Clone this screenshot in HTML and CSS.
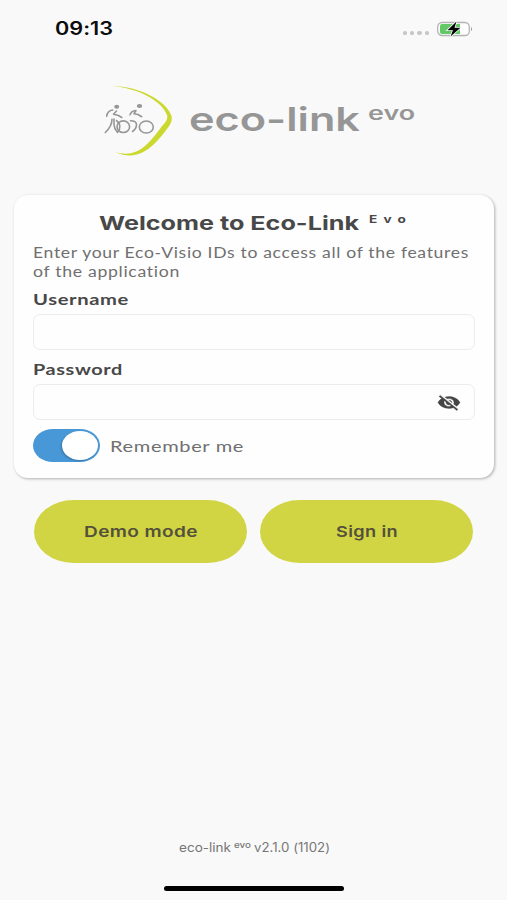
FILE: index.html
```html
<!DOCTYPE html>
<html lang="en">
<head>
<meta charset="utf-8">
<title>Eco-Link Evo</title>
<link rel="stylesheet" href="styles.css">
</head>
<body>
<div class="status">
  <span class="fit time" data-width="58">09:13</span>
  <div class="status-icons">
    <div class="dots"><i></i><i></i><i></i><i></i></div>
    <svg class="battery" width="38" height="18" viewBox="0 0 38 18">
      <rect x="1.7" y="2.500" width="31.600" height="13" rx="4.500" fill="#fff" stroke="#b3b3b3" stroke-width="1.300"/>
      <path d="M6 4h18v10H6q-2 0-2-2V6q0-2 2-2z" fill="#62c966"/>
      <path d="M35 6.700q2 2.300 0 4.600z" fill="#999"/>
      <path d="M20.500 1.500 11.500 10.300h5.500L14.500 16.500l10-8.800h-6z" fill="#000" stroke="#fff" stroke-width="1.600" paint-order="stroke"/>
    </svg>
  </div>
</div>
<header class="brand">
  <svg width="70" height="72" viewBox="0 0 70 72">
    <path d="M8 1C35 1 63 16 67.500 31c1 5-1 8-3 11C50 61 36 78 11 67c21 6 32-5 47-26 4-4 6-7 5-11C58 16 34 3 8 1z" fill="#cbd92f"/>
    <g fill="none" stroke="#969696" stroke-width="1.600" stroke-linecap="round" stroke-linejoin="round">
      <path d="M2.700 31.300C3 28 5 25.500 8.700 25M12.500 26 9.500 29.200l5 1.300 3.200 2"/>
      <path d="M8 34.300C8 40 5 44 1.300 47.500M10 34v5.500c0 3 1.500 5.500 3.300 7.500M12.500 35.500c4 3 4.500 8 1 12"/>
      <ellipse cx="19.300" cy="41.700" rx="6.300" ry="5.800"/>
      <path d="M26 29.700C27 27 29 25.700 32 25.500l-2 3.200 4 .8 3.700 2.200M26.500 35.700c4 0 6 1.300 6 4 0 3-1.700 5-4 6.800"/>
      <ellipse cx="42.300" cy="42" rx="7" ry="6"/>
    </g>
    <ellipse cx="12.700" cy="21.700" rx="2.500" ry="2" fill="#969696"/>
    <ellipse cx="35.500" cy="21" rx="2.700" ry="2" fill="#969696"/>
  </svg>
  <span class="fit brand-name" data-width="171">eco-link</span>
  <span class="fit brand-sup" data-width="47">evo</span>
</header>
<main class="card">
  <h1 class="title"><span class="fit" data-width="260">Welcome to Eco-Link</span><span class="fit title-sup" data-width="43">Evo</span></h1>
  <p class="intro"><span class="fit" data-width="436">Enter your Eco-Visio IDs to access all of the features</span><span class="fit" data-width="147">of the application</span></p>
  <label class="label" for="user"><span class="fit" data-width="96">Username</span></label>
  <div class="field"><input id="user" type="text"></div>
  <label class="label" for="pass"><span class="fit" data-width="90">Password</span></label>
  <div class="field">
    <input id="pass" type="password">
    <svg class="eye" width="24" height="19" viewBox="0 0 24 24" preserveAspectRatio="none"><path fill="#444" stroke="#444" stroke-width=".4" d="M12 7c2.760 0 5 2.240 5 5 0 .650-.130 1.260-.360 1.830l2.920 2.920c1.510-1.260 2.700-2.890 3.430-4.750-1.730-4.390-6-7.500-11-7.500-1.400 0-2.740.250-3.980.700l2.160 2.160C10.740 7.130 11.350 7 12 7zM2 4.270l2.280 2.280.460.460C3.080 8.300 1.780 10.020 1 12c1.730 4.390 6 7.500 11 7.500 1.550 0 3.030-.300 4.380-.840l.420.420L19.730 22 21 20.730 3.270 3 2 4.270zM7.530 9.800l1.550 1.550c-.050.210-.080.430-.080.650 0 1.660 1.340 3 3 3 .220 0 .440-.030.650-.080l1.550 1.550c-.670.330-1.410.530-2.200.530-2.760 0-5-2.240-5-5 0-.790.200-1.530.530-2.200zm4.310-.780 3.150 3.150.020-.160c0-1.660-1.340-3-3-3l-.170.010z"/></svg>
  </div>
  <div class="remember">
    <span class="toggle"><i></i></span>
    <span class="fit" data-width="134">Remember me</span>
  </div>
</main>
<div class="actions">
  <button type="button"><span class="fit" data-width="114">Demo mode</span></button>
  <button type="button"><span class="fit" data-width="62">Sign in</span></button>
</div>
<footer class="version">
  <span class="fit" data-width="52">eco-link</span>
  <span class="fit version-sup" data-width="17">evo</span>
  <span class="fit" data-width="76">v2.1.0 (1102)</span>
</footer>
<div class="home-bar"></div>
<script src="fit.js"></script>
</body>
</html>
```
FILE: styles.css
```css
* { box-sizing: border-box; }
body {
  margin: 0;
  width: 507px;
  height: 900px;
  overflow: hidden;
  display: flex;
  flex-direction: column;
  background: #f9f9f9;
  color: #484848;
  font-family: Inter, "Liberation Sans", sans-serif;
  font-variant-ligatures: none;
}
i { display: block; }
.fit { display: inline-block; white-space: nowrap; flex: none; }

.status { display: flex; justify-content: space-between; align-items: center; height: 57px; padding: 0 33px 0 55px; }
.time { font-size: 18px; font-weight: 600; color: #0c0c0c; }
.status-icons { display: flex; align-items: center; gap: 7px; }
.dots { display: flex; gap: 3px; padding-top: 9px; }
.dots i { width: 4.300px; height: 4px; border-radius: 50%; background: #c6c6c6; }

.brand { display: flex; height: 72px; margin: 28px 0 38px 104px; color: #969696; }
.brand-name { font-size: 33px; font-weight: 600; line-height: 68px; margin-left: 15px; }
.brand-sup { font-size: 18.500px; font-weight: 600; line-height: 56px; margin-left: 8px; }

.card { width: 480px; height: 283px; margin-left: 14px; padding: 12px 19px 0; border-radius: 14px; background: #fefefe; box-shadow: 1px 1px 3px rgba(0, 0, 0, .3); }
.title { display: flex; margin: 0 0 5px 66px; font-size: 19px; font-weight: 700; line-height: 33px; height: 31px; }
.title-sup { font-size: 11px; line-height: 24px; margin-left: 10px; letter-spacing: 5px; }
.intro { margin: 0 0 8px; display: flex; flex-direction: column; align-items: flex-start; font-family: Lato, sans-serif; font-size: 15.500px; letter-spacing: .6px; line-height: 18.500px; color: #707070; }
.label { display: block; height: 21px; line-height: 21px; margin-bottom: 5px; font-family: Lato, sans-serif; font-size: 16px; font-weight: 700; letter-spacing: .5px; }
.field { display: flex; align-items: center; width: 442px; height: 36px; margin-bottom: 8px; padding-right: 13px; border: 1px solid #ececec; border-radius: 7px; }
.field input { flex: 1; min-width: 0; height: 30px; border: 0; background: transparent; outline: 0; }
.remember { display: flex; align-items: center; height: 33px; margin-top: 9px; gap: 10px; font-family: Lato, sans-serif; font-size: 16px; letter-spacing: .5px; color: #707070; }
.toggle { width: 67px; height: 33px; padding: 2px 2px 2px 29px; border-radius: 20px / 16.500px; background: #4897d6; }
.toggle i { width: 36px; height: 29px; border-radius: 50%; background: #fff; box-shadow: -1px 1px 2px rgba(0, 0, 0, .2); }

.actions { display: flex; gap: 13px; margin: 21.500px 0 0 34.400px; }
.actions button { display: flex; justify-content: center; align-items: center; width: 213px; height: 63.500px; padding: 1px 0 0; border: 0; border-radius: 40px / 32px; background: #d1d544; color: #55503a; font: 600 15px Inter, sans-serif; letter-spacing: .3px; }

.version { display: flex; margin: auto 0 0 178.500px; height: 20px; font-size: 12.500px; line-height: 20px; color: #777; }
.version-sup { margin: 0 3px; font-size: 8.500px; font-weight: 500; line-height: 14px; }
.home-bar { width: 180px; height: 5px; margin: 28px 0 9px 164px; border-radius: 3px; background: #000; }
```
FILE: fit.js
```js
// Widen each text run to its design width and reserve that width in the layout.
document.querySelectorAll('.fit').forEach(function (el) {
  var target = Number(el.dataset.width);
  var natural = el.getBoundingClientRect().width;
  var inner = document.createElement('span');
  inner.style.display = 'inline-block';
  inner.style.transformOrigin = 'left center';
  inner.style.transform = 'scaleX(' + target / natural + ')';
  inner.textContent = el.textContent;
  el.textContent = '';
  el.style.width = target + 'px';
  el.style.textAlign = 'left';
  el.appendChild(inner);
});
```
